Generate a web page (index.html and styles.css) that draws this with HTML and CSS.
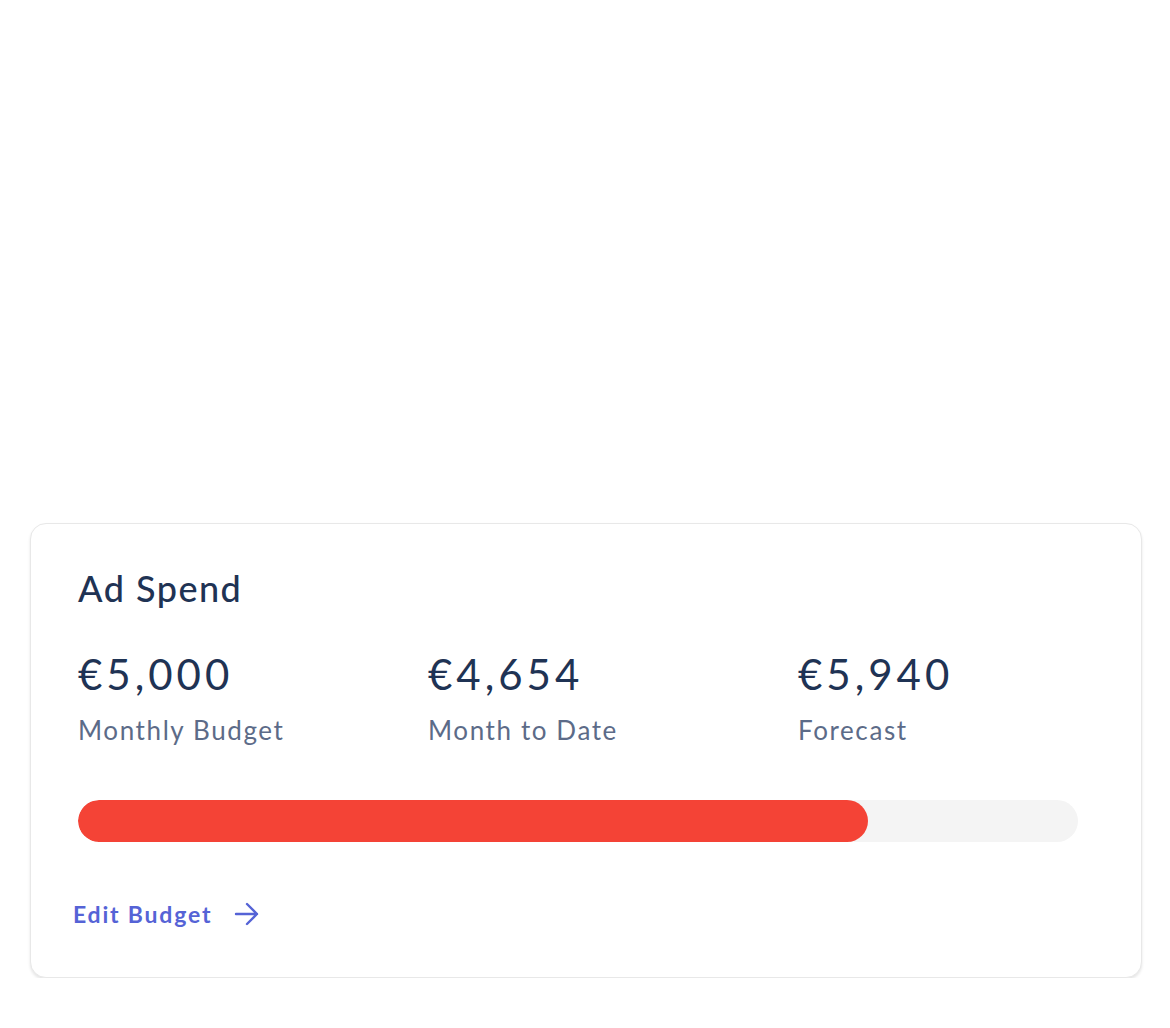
FILE: index.html
```html
<!DOCTYPE html>
<html>
<head>
<meta charset="utf-8">
<link rel="stylesheet" href="styles.css">
</head>
<body>
<div class="page">
  <section class="card">
    <h2 class="card-title">Ad Spend</h2>
    <div class="stats">
      <div class="stat">
        <div class="stat-value">€5,000</div>
        <div class="stat-label">Monthly Budget</div>
      </div>
      <div class="stat">
        <div class="stat-value">€4,654</div>
        <div class="stat-label">Month to Date</div>
      </div>
      <div class="stat">
        <div class="stat-value">€5,940</div>
        <div class="stat-label">Forecast</div>
      </div>
    </div>
    <div class="progress">
      <div class="progress-fill" style="width: 79%"></div>
    </div>
    <a class="edit-link" href="#">Edit Budget
      <svg class="arrow" width="26" height="24" viewBox="0 0 26 24" fill="none" stroke="currentColor" stroke-width="2.4" stroke-linecap="round" stroke-linejoin="round"><path d="M2 12h21M13 2l10 10-10 10"/></svg>
    </a>
  </section>
</div>
</body>
</html>
```
FILE: styles.css
```css
* { box-sizing: border-box; }
html, body { margin: 0; padding: 0; background: #fff; }
body { font-family: Lato, "Open Sans", sans-serif; }
.page { padding: 523px 28px 0 30px; }
.card {
  width: 1112px;
  height: 455px;
  border: 1px solid #e8e8e8;
  border-radius: 16px;
  box-shadow: 0 2px 3px rgba(0,0,0,0.10);
  padding: 42px 48px 0 47px;
  background: #fff;
}
.card-title {
  margin: 0;
  font-size: 36px;
  font-weight: 500;
  letter-spacing: 1.5px;
  color: #1f3354;
  line-height: 44px;
}
.stats {
  display: grid;
  grid-template-columns: 350px 370px 1fr;
  margin-top: 39px;
}
.stat-value {
  font-size: 42px;
  font-weight: 400;
  letter-spacing: 4px;
  color: #1f3354;
  line-height: 50px;
}
.stat-label {
  font-size: 26px;
  letter-spacing: 1.6px;
  color: #5c6b88;
  line-height: 34px;
  margin-top: 14px;
}
.progress {
  margin-top: 53px;
  width: 1000px;
  height: 42px;
  border-radius: 21px;
  background: #f4f4f4;
  overflow: hidden;
}
.progress-fill {
  height: 100%;
  background: #f44336;
  border-radius: 21px;
}
.edit-link {
  display: inline-flex;
  align-items: center;
  gap: 22px;
  margin-top: 57px;
  margin-left: -5px;
  font-size: 23px;
  font-weight: 700;
  letter-spacing: 1.8px;
  color: #5563d6;
  text-decoration: none;
  line-height: 30px;
}
.arrow { display: block; }
```
